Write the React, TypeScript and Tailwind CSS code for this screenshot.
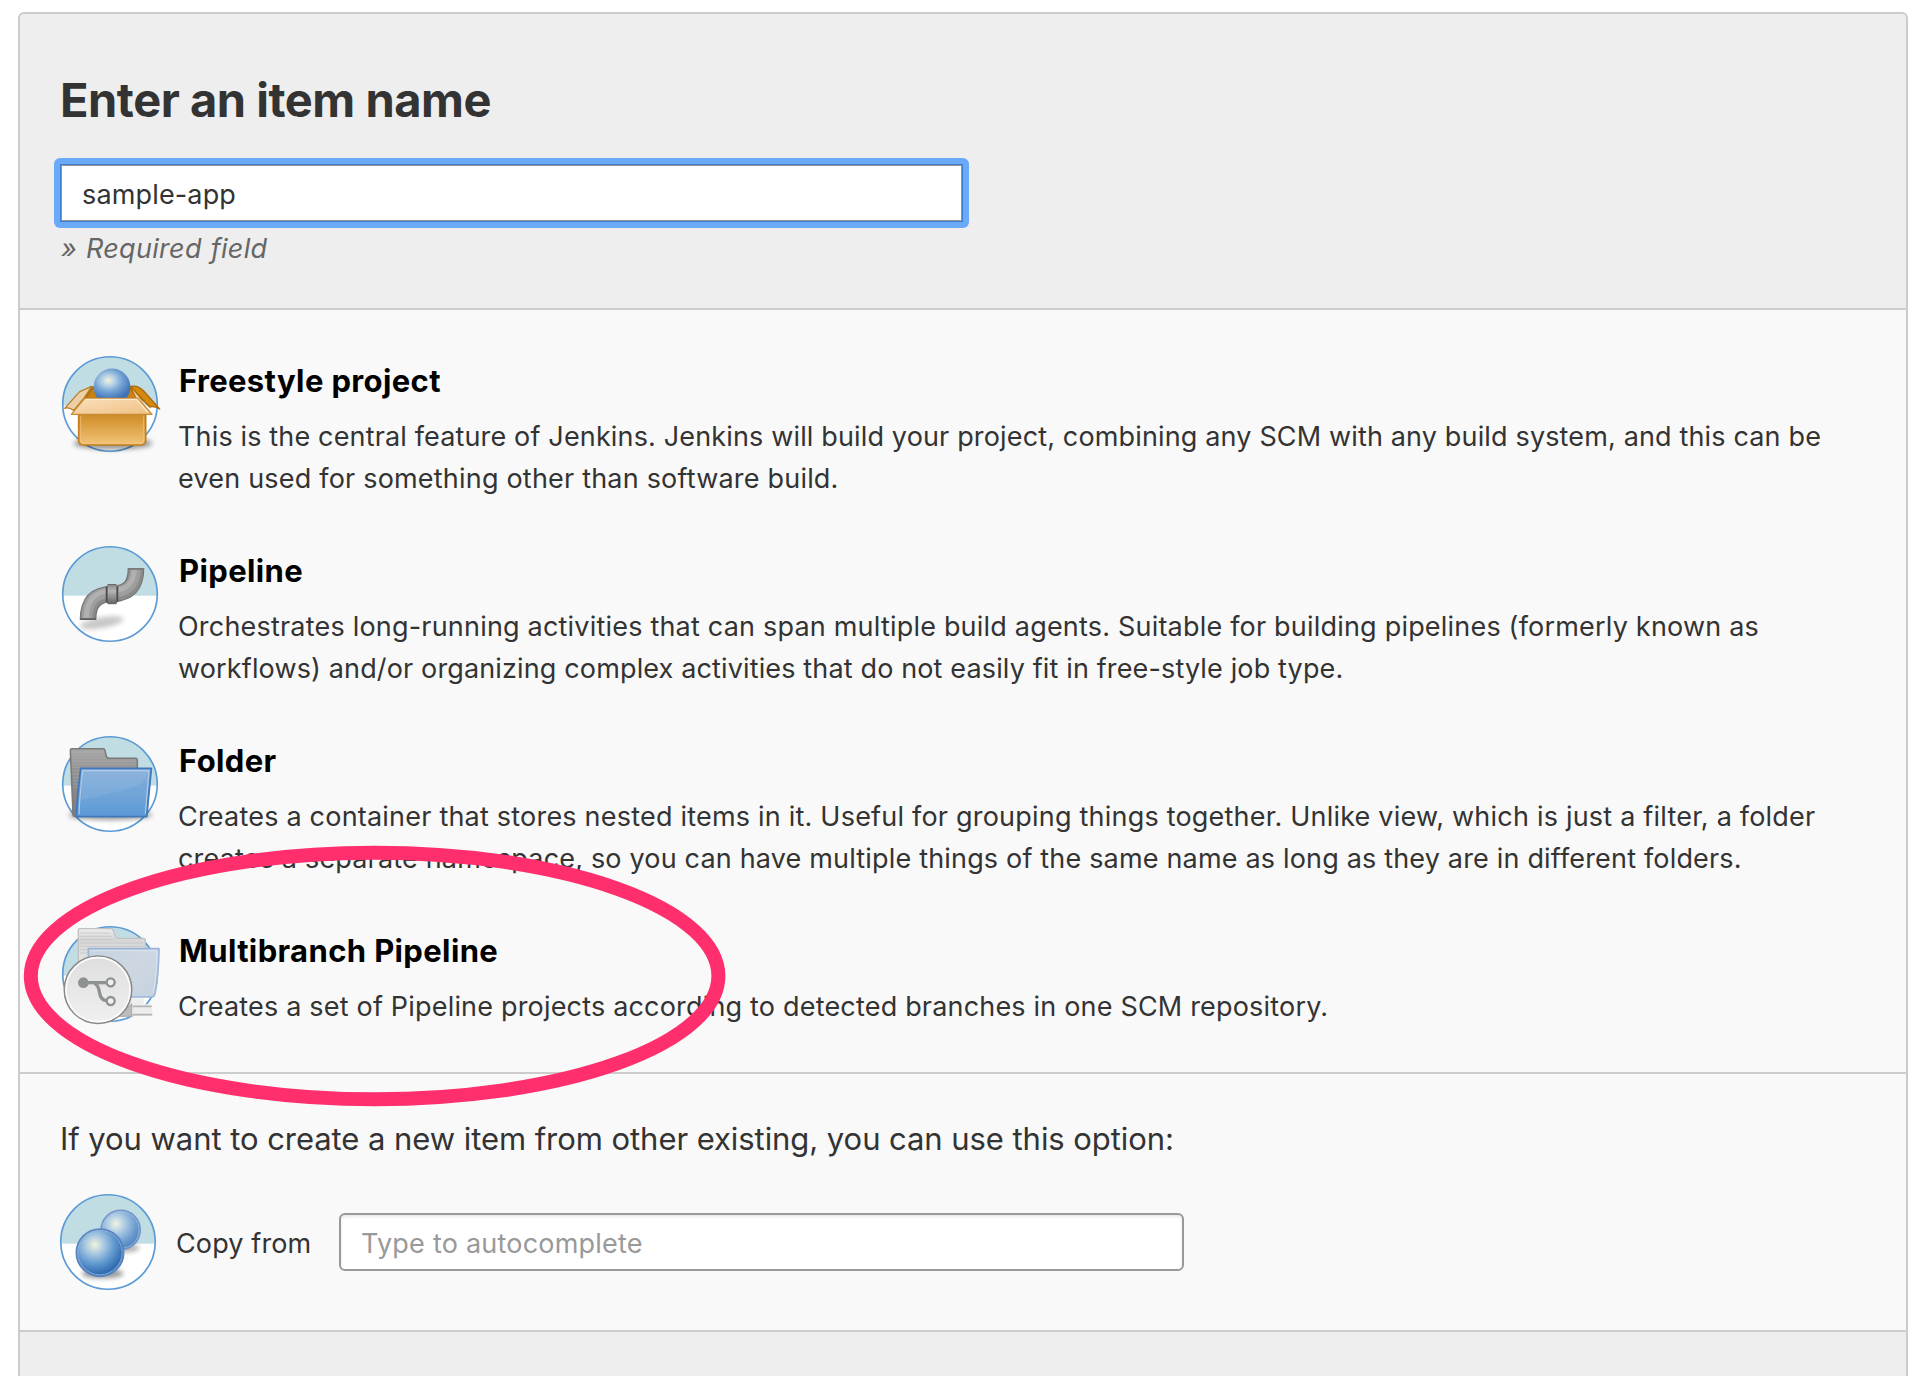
import React from 'react';
import type { ReactNode } from 'react';

/** Round badge behind every item icon: pale blue above, white below. */
function Badge({ id, children }: { id: string; children: ReactNode }) {
  return (
    <svg className="block size-24 shrink-0 overflow-visible" viewBox="37 33 288 288" aria-hidden="true">
      <defs>
        <clipPath id={`${id}-clip`}>
          <circle cx="181" cy="177" r="142" />
        </clipPath>
        <filter id={`${id}-blur`} x="-30%" y="-80%" width="160%" height="260%">
          <feGaussianBlur stdDeviation="8" />
        </filter>
        <filter id={`${id}-soft`} x="-10%" y="-10%" width="120%" height="120%">
          <feGaussianBlur stdDeviation="2.2" />
        </filter>
      </defs>
      <g clipPath={`url(#${id}-clip)`}>
        <rect x="37" y="33" width="288" height="288" fill="#ffffff" />
        <rect x="37" y="33" width="288" height="149" fill="#c1dde4" />
      </g>
      <circle cx="181" cy="177" r="141.8" fill="none" stroke="#5b9bd5" strokeWidth="5" />
      {children}
    </svg>
  );
}

function FreestyleIcon() {
  return (
    <Badge id="fs">
      <defs>
        <radialGradient id="fs-ball" cx="0.4" cy="0.4" r="0.66">
          <stop offset="0" stopColor="#f2f4d8" />
          <stop offset="0.25" stopColor="#b9d3e6" />
          <stop offset="0.6" stopColor="#6f9fd3" />
          <stop offset="1" stopColor="#3c72b4" />
        </radialGradient>
        <linearGradient id="fs-front" x1="0" y1="0" x2="0" y2="1">
          <stop offset="0" stopColor="#c98a25" />
          <stop offset="0.3" stopColor="#d99b3c" />
          <stop offset="1" stopColor="#f2c57a" />
        </linearGradient>
        <linearGradient id="fs-flap" x1="0" y1="0" x2="1" y2="1">
          <stop offset="0" stopColor="#fae0bd" />
          <stop offset="1" stopColor="#efc083" />
        </linearGradient>
      </defs>
      <ellipse cx="190" cy="295" rx="118" ry="18" fill="#000" opacity="0.42" filter="url(#fs-blur)" />
      <g filter="url(#fs-soft)">
        <path d="M90 156 L122 124 L246 124 L276 156 L290 205 H80 Z" fill="#b06f0c" />
        <path d="M112 158 L128 134 H242 L262 160 Z" fill="#c98212" />
        <path d="M45 190 L90 140 L126 124 L104 158 L72 196 Q56 186 45 190 Z" fill="#edcfa6" stroke="#b9802c" strokeWidth="4" strokeLinejoin="round" />
        <path d="M242 124 Q266 120 282 138 L330 192 Q312 182 300 186 Z" fill="#d68a09" stroke="#a86a10" strokeWidth="4" strokeLinejoin="round" />
        <path d="M248 132 L306 204 L270 176 Z" fill="#f4dab2" />
        <path d="M144 160 A55 55 0 1 1 230 160 Z" fill="url(#fs-ball)" />
        <path d="M87 205 H288 V286 Q288 298 276 300 H99 Q87 298 87 286 Z" fill="url(#fs-front)" stroke="#c27f1c" strokeWidth="5" />
        <path d="M93 212 V284 Q93 293 101 294 H274 Q282 293 282 284 V212" fill="none" stroke="#f3c57e" strokeWidth="3" opacity="0.7" />
        <path d="M105 160 H264 L307 208 H65 Z" fill="url(#fs-flap)" stroke="#c98c35" strokeWidth="4" strokeLinejoin="round" />
        <path d="M109 163 H261 L294 202" fill="none" stroke="#fdebd0" strokeWidth="4" />
      </g>
    </Badge>
  );
}

function PipelineIcon() {
  return (
    <Badge id="pl">
      <defs>
        <linearGradient id="pl-collar" x1="0" y1="0" x2="0" y2="1">
          <stop offset="0" stopColor="#8c8c8c" />
          <stop offset="0.35" stopColor="#b4b4b4" />
          <stop offset="1" stopColor="#636363" />
        </linearGradient>
      </defs>
      <ellipse cx="156" cy="263" rx="66" ry="16" fill="#000" opacity="0.22" filter="url(#pl-blur)" transform="rotate(-10 156 263)" />
      <g filter="url(#pl-soft)" fill="none">
        <path d="M115 255 C115 202 138 178 188 177 C240 174 259 150 259 99" stroke="#707070" strokeWidth="50" />
        <path d="M115 252 C115 202 138 178 188 177 C240 174 259 150 259 102" stroke="#8a8a8a" strokeWidth="44" />
        <path d="M112 251 C112 198 138 173 188 172 C238 170 256 146 257 103" stroke="#9e9e9e" strokeWidth="32" />
        <path d="M110 250 C110 195 138 168 186 167 C234 166 252 144 254 104" stroke="#b0b0b0" strokeWidth="15" />
        <path d="M235 102 H283" stroke="#7c7c7c" strokeWidth="5" />
        <path d="M92 252 H139" stroke="#5e5e5e" strokeWidth="5" />
        <rect x="171" y="148" width="32" height="59" rx="7" fill="url(#pl-collar)" />
        <path d="M171 154 V201 M203 154 V201" stroke="#4c4c4c" strokeWidth="5.5" />
        <path d="M174 149 H200 M174 206 H200" stroke="#6b6b6b" strokeWidth="4" />
      </g>
    </Badge>
  );
}

function FolderIcon() {
  return (
    <Badge id="fd">
      <defs>
        <linearGradient id="fd-back" x1="0" y1="0" x2="0" y2="1">
          <stop offset="0" stopColor="#a9a9a9" />
          <stop offset="0.3" stopColor="#939393" />
          <stop offset="1" stopColor="#7c7c7c" />
        </linearGradient>
        <linearGradient id="fd-front" x1="0" y1="0" x2="0" y2="1">
          <stop offset="0" stopColor="#86afdb" />
          <stop offset="0.5" stopColor="#72a5d8" />
          <stop offset="1" stopColor="#5b9ad6" />
        </linearGradient>
      </defs>
      <ellipse cx="182" cy="270" rx="125" ry="15" fill="#000" opacity="0.4" filter="url(#fd-blur)" />
      <g filter="url(#fd-soft)">
        <path d="M62 76 Q62 71 67 71 H160 Q165 71 166 76 L170 94 Q172 100 178 100 H258 Q263 100 263 105 V270 Q263 274 258 274 H74 Q70 274 70 270 Z" fill="url(#fd-back)" stroke="#7a7a7a" strokeWidth="4.5" />
        <g stroke="#b2b2b2" strokeWidth="2" opacity="0.65">
          <path d="M68 82 H160 M68 91 H163 M68 100 H168 M68 109 H258 M68 118 H258 M68 127 H258 M69 137 H92 M69 147 H92 M70 157 H90 M70 167 H89 M70 177 H88 M71 187 H88" />
        </g>
        <path d="M93 130 H305 L291 275 H80 Q82 220 93 130 Z" fill="url(#fd-front)" stroke="#4179ba" strokeWidth="5.5" strokeLinejoin="round" />
        <path d="M99 137 H297 Q286 175 250 187 Q190 205 96 226 Z" fill="#ffffff" opacity="0.07" />
        <path d="M88 268 Q90 215 99 137 H298 L287 266" fill="none" stroke="#aecbe9" strokeWidth="3.5" />
      </g>
    </Badge>
  );
}

function MultibranchIcon() {
  return (
    <Badge id="mb">
      <defs>
        <linearGradient id="mb-back" x1="0" y1="0" x2="0" y2="1">
          <stop offset="0" stopColor="#eeeeee" />
          <stop offset="0.3" stopColor="#d6d6d6" />
          <stop offset="1" stopColor="#e6e6e6" />
        </linearGradient>
        <linearGradient id="mb-front" x1="0" y1="0" x2="1" y2="1">
          <stop offset="0" stopColor="#c6d3e3" />
          <stop offset="0.5" stopColor="#cdd7e2" />
          <stop offset="1" stopColor="#c5d2df" />
        </linearGradient>
        <linearGradient id="mb-disc" x1="0" y1="0" x2="0" y2="1">
          <stop offset="0" stopColor="#dedede" />
          <stop offset="1" stopColor="#f0f0f0" />
        </linearGradient>
      </defs>
      <g filter="url(#mb-soft)">
        <path d="M228 250 H282 V268 H306 V302 H206 Z" fill="#eeeeee" />
        <path d="M206 304 L246 266 V304 Z" fill="#bcbcbc" stroke="#a9a9a9" strokeWidth="3" />
        <path d="M248 274 H306 M248 299 H308" stroke="#b3b3b3" strokeWidth="5" />
        <path d="M250 286 H308" stroke="#ececec" strokeWidth="9" />
        <path d="M86 45 Q86 41 90 41 H184 Q188 41 190 45 L198 66 Q200 70 204 70 H282 Q287 70 287 75 V150 H86 Z" fill="url(#mb-back)" stroke="#c1c1c1" strokeWidth="4" />
        <path d="M92 54 H182 M92 64 H187 M92 74 H194 M92 84 H281 M92 94 H281 M92 104 H116 M92 114 H116" stroke="#bebebe" strokeWidth="2.5" opacity="0.75" />
        <path d="M116 101 H328 Q327 180 316 236 Q313 246 304 246 H116 Z" fill="url(#mb-front)" stroke="#9cb6d9" strokeWidth="5" strokeLinejoin="round" />
        <path d="M121 107 H322 Q321 180 311 233" fill="none" stroke="#dce4ee" strokeWidth="3" />
        <circle cx="145" cy="224" r="101" fill="url(#mb-disc)" stroke="#8a8a8a" strokeWidth="5" />
        <circle cx="145" cy="224" r="96" fill="none" stroke="#fbfbfb" strokeWidth="5" />
        <g fill="none" stroke="#8e928f" strokeWidth="10">
          <path d="M101 203 H170" />
          <path d="M134 205 Q146 210 149 230 Q153 257 172 257" />
        </g>
        <circle cx="101" cy="203" r="16" fill="#8e928f" />
        <circle cx="183" cy="202" r="12" fill="#f0f0f0" stroke="#8e928f" strokeWidth="7" />
        <circle cx="183" cy="258" r="12" fill="#f0f0f0" stroke="#8e928f" strokeWidth="7" />
      </g>
    </Badge>
  );
}

function CopyIcon() {
  return (
    <Badge id="cp">
      <defs>
        <radialGradient id="cp-back" cx="0.38" cy="0.34" r="0.7">
          <stop offset="0" stopColor="#eff3df" />
          <stop offset="0.3" stopColor="#b3cfe6" />
          <stop offset="0.7" stopColor="#6f9dd0" />
          <stop offset="1" stopColor="#4a7ebd" />
        </radialGradient>
        <radialGradient id="cp-front" cx="0.39" cy="0.33" r="0.68">
          <stop offset="0" stopColor="#f2f4d8" />
          <stop offset="0.25" stopColor="#b3cfe2" />
          <stop offset="0.6" stopColor="#6199d0" />
          <stop offset="0.9" stopColor="#326eb2" />
          <stop offset="1" stopColor="#3a74b6" />
        </radialGradient>
      </defs>
      {/* The spheres sit slightly lower and further left than the badge centre */}
      <g transform="translate(-1 -1)">
        <ellipse cx="238" cy="196" rx="38" ry="12" fill="#000" opacity="0.32" filter="url(#cp-blur)" />
        <ellipse cx="166" cy="273" rx="62" ry="14" fill="#000" opacity="0.42" filter="url(#cp-blur)" />
        <g filter="url(#cp-soft)">
          <circle cx="220" cy="142" r="59" fill="url(#cp-back)" stroke="#7597cb" strokeWidth="4.5" />
          <circle cx="220" cy="142" r="55" fill="none" stroke="#9dbce0" strokeWidth="2.5" />
          <circle cx="158" cy="210" r="71" fill="url(#cp-front)" stroke="#5b84be" strokeWidth="5" />
          <circle cx="158" cy="210" r="66.5" fill="none" stroke="#8fb3dd" strokeWidth="2.5" />
        </g>
      </g>
    </Badge>
  );
}

interface Item {
  title: string;
  icon: ReactNode;
  lines: { text: string; tracking: string }[];
}

const items: Item[] = [
  {
    title: 'Freestyle project',
    icon: <FreestyleIcon />,
    lines: [
      {
        text: 'This is the central feature of Jenkins. Jenkins will build your project, combining any SCM with any build system, and this can be',
        tracking: 'tracking-[0.15px]',
      },
      { text: 'even used for something other than software build.', tracking: 'tracking-[0.2px]' },
    ],
  },
  {
    title: 'Pipeline',
    icon: <PipelineIcon />,
    lines: [
      {
        text: 'Orchestrates long-running activities that can span multiple build agents. Suitable for building pipelines (formerly known as',
        tracking: 'tracking-[0.2px]',
      },
      {
        text: 'workflows) and/or organizing complex activities that do not easily fit in free-style job type.',
        tracking: 'tracking-[0.14px]',
      },
    ],
  },
  {
    title: 'Folder',
    icon: <FolderIcon />,
    lines: [
      {
        text: 'Creates a container that stores nested items in it. Useful for grouping things together. Unlike view, which is just a filter, a folder',
        tracking: 'tracking-[0.21px]',
      },
      {
        text: 'creates a separate namespace, so you can have multiple things of the same name as long as they are in different folders.',
        tracking: 'tracking-[0.175px]',
      },
    ],
  },
  {
    title: 'Multibranch Pipeline',
    icon: <MultibranchIcon />,
    lines: [
      {
        text: 'Creates a set of Pipeline projects according to detected branches in one SCM repository.',
        tracking: 'tracking-[0.185px]',
      },
    ],
  },
];

export default function App() {
  return (
    <div className="relative flex h-[1376px] w-[1924px] flex-col overflow-hidden bg-white pt-3 pr-4 pl-[18px] font-['Inter','Liberation_Sans',sans-serif] text-[27px] text-[#333333]">
      <main className="flex grow flex-col rounded-t-md border-2 border-b-0 border-[#cccccc] bg-[#eeeeee]">
        <header className="h-[296px] border-b-2 border-[#cccccc] px-10 pt-[58px]">
          <h1 className="text-[47px] leading-[56px] font-bold tracking-[-0.47px]">Enter an item name</h1>
          <div className="mt-[30px] -ml-1.5 w-[915px] rounded-md bg-[#6aaaf9] p-1.5">
            <input
              defaultValue="sample-app"
              className="block h-[58px] w-full border border-[#3d7dcc] bg-white px-[21px] pt-[2px] tracking-[0.15px] shadow-[inset_0_0_0_1px_#949494] outline-none"
            />
          </div>
          <p className="mt-1.5 pl-px leading-[30px] tracking-[0.3px] text-[#666666] italic [word-spacing:1px]">» Required field</p>
        </header>

        <ul className="flex flex-col gap-[46px] border-b-2 border-[#cccccc] bg-[#f9f9f9] pt-[46px] pb-11 pl-[42px]">
          {items.map((item) => (
            <li key={item.title} className="flex gap-5">
              {item.icon}
              <div className="pt-1.5">
                <h2 className="pl-px text-[31px] leading-[38px] font-bold tracking-[0.37px] text-black">{item.title}</h2>
                <p className="mt-4 leading-[42px] whitespace-nowrap">
                  {item.lines.map((line) => (
                    <span key={line.text} className={`block ${line.tracking}`}>
                      {line.text}
                    </span>
                  ))}
                </p>
              </div>
            </li>
          ))}
        </ul>

        <section className="h-[258px] border-b-2 border-[#cccccc] bg-[#f9f9f9] px-10 pt-[45px]">
          <p className="text-[31px] leading-10 tracking-[-0.06px]">
            If you want to create a new item from other existing, you can use this option:
          </p>
          <div className="mt-[35px] flex items-center">
            <CopyIcon />
            <label htmlFor="from" className="ml-5 w-[163px] pt-1 tracking-[0.13px]">
              Copy from
            </label>
            <input
              id="from"
              placeholder="Type to autocomplete"
              className="h-[58px] w-[845px] rounded-md border-2 border-[#999999] bg-white px-5 pt-0.5 tracking-[0.22px] shadow-[inset_0_2px_3px_rgba(0,0,0,0.09)] outline-none placeholder:text-[#999999]"
            />
          </div>
        </section>
      </main>

      {/* Hand-drawn highlight around the multibranch entry */}
      <svg className="pointer-events-none absolute top-[845px] left-[23px] h-[262px] w-[704px]" viewBox="0 0 704 262" aria-hidden="true">
        <ellipse cx="351.6" cy="131" rx="343.8" ry="123.3" fill="none" stroke="#ff2f6e" strokeWidth="14" />
      </svg>
    </div>
  );
}
